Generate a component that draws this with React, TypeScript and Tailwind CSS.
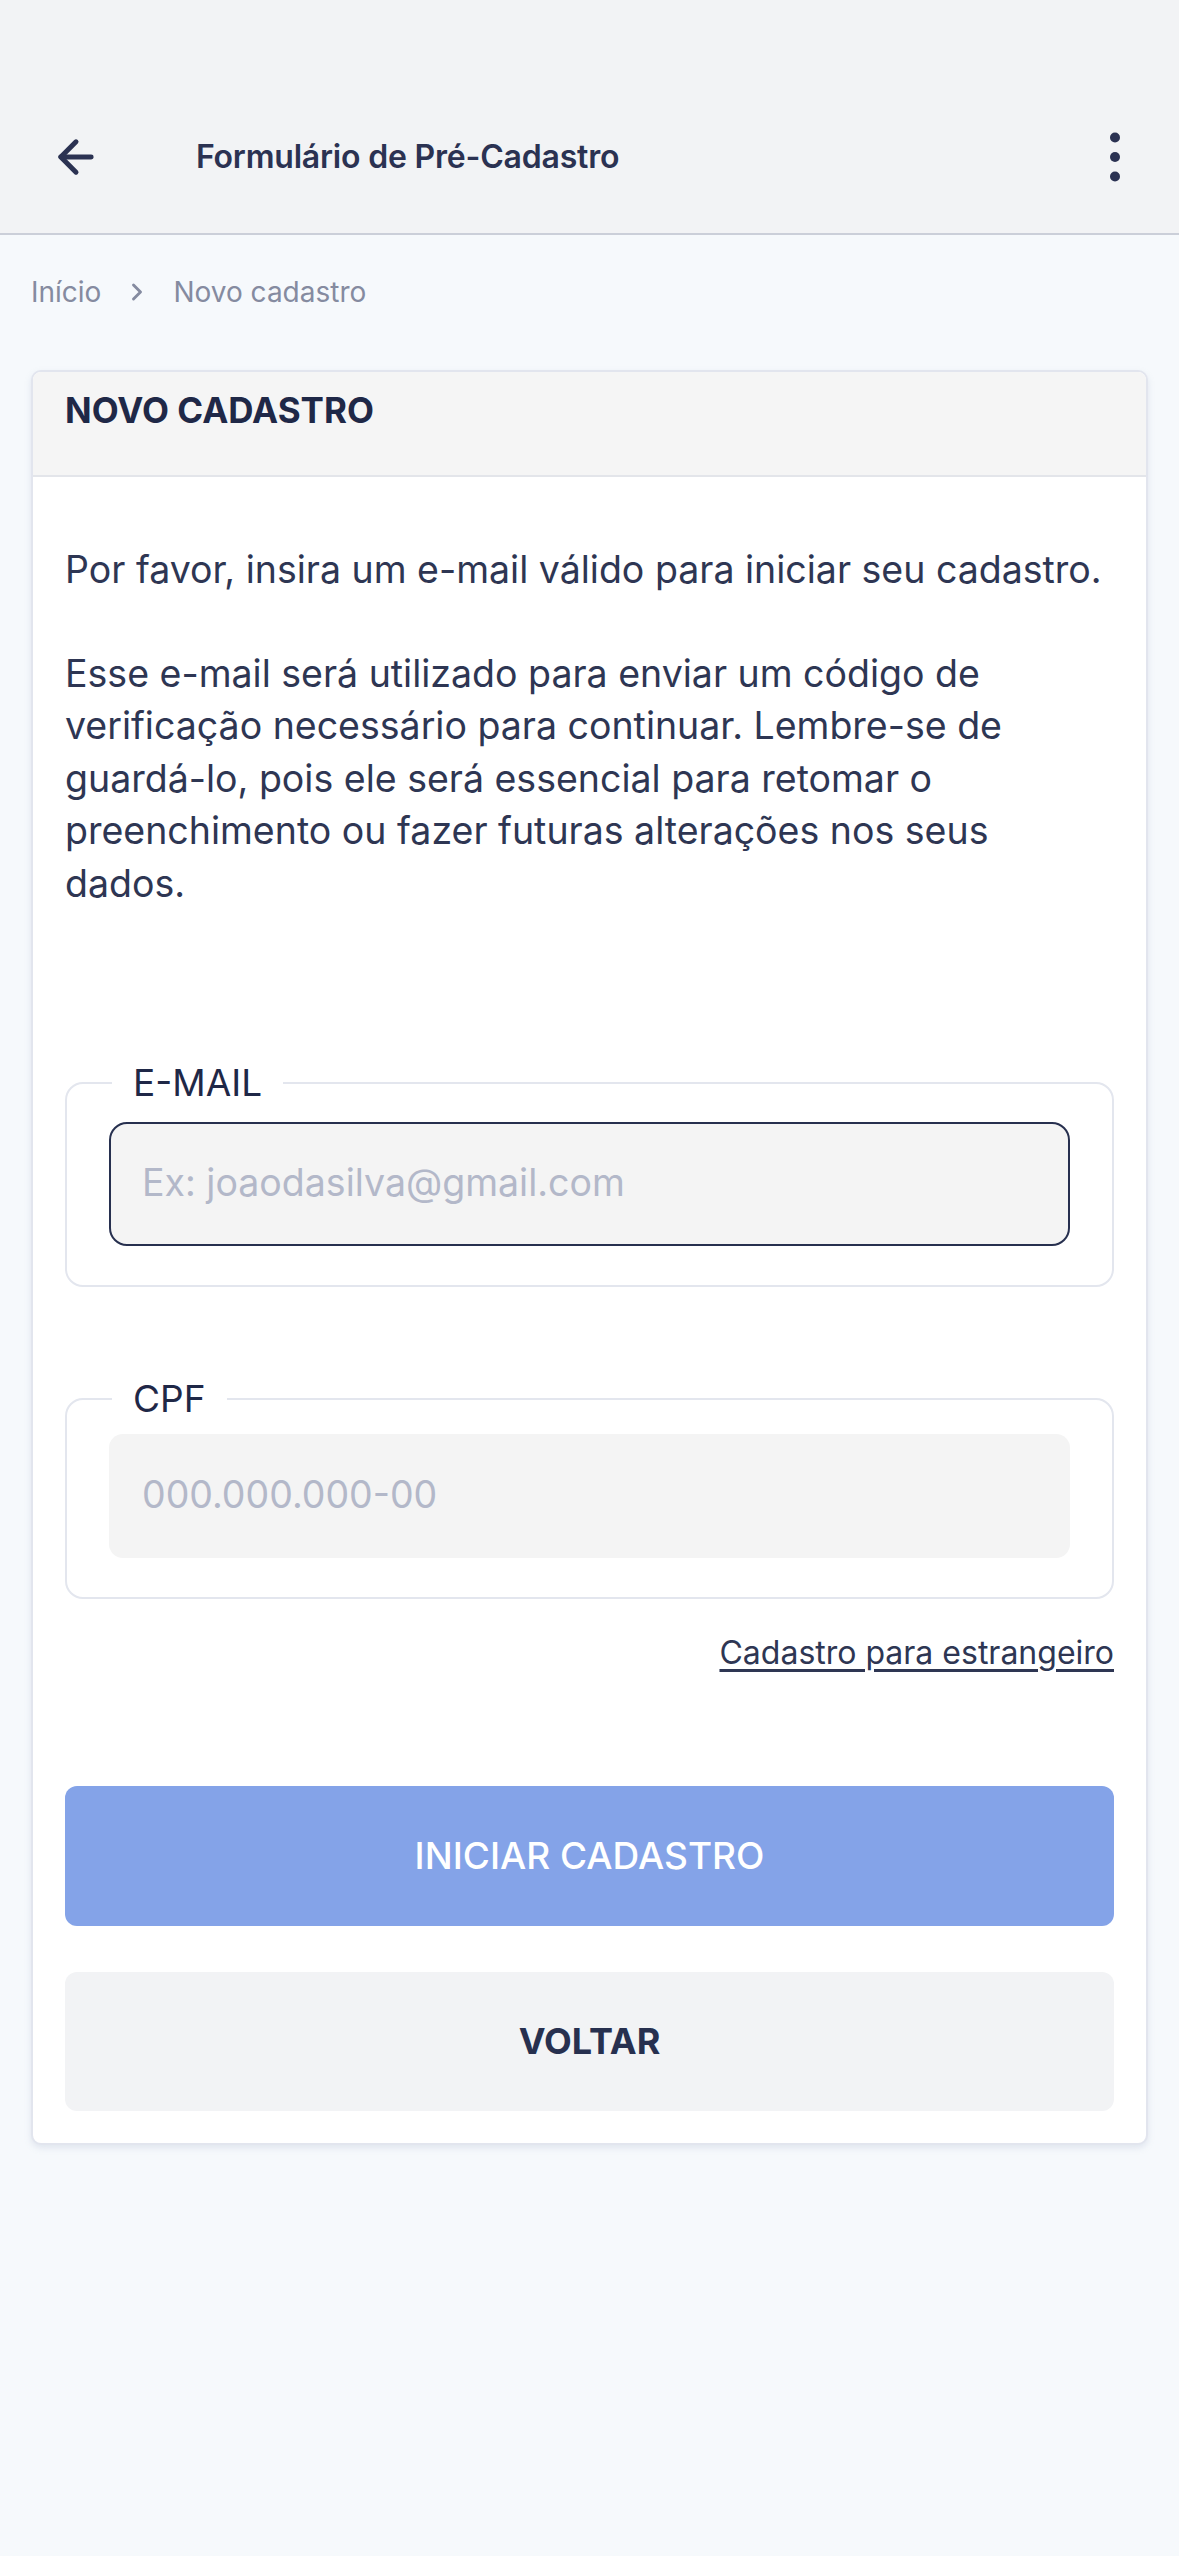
import { ArrowLeft, ChevronRight } from 'lucide-react'

function Field({
  label,
  placeholder,
  active,
  top,
}: {
  label: string
  placeholder: string
  active?: boolean
  top: string
}) {
  return (
    <fieldset className={`border-2 border-[#e3e6ee] rounded-[18px] px-[42px] pb-[39px] ${top}`}>
      <legend className="ml-[3px] px-[21px] text-[37px] leading-[40px] text-[#1f2847]">{label}</legend>
      <div
        className={
          active
            ? 'h-[124px] rounded-[18px] border-2 border-[#27304f] bg-[#f4f4f4] flex items-center px-[31px]'
            : 'h-[124px] rounded-[14px] bg-[#f4f4f4] flex items-center px-[33px]'
        }
      >
        <span className="text-[37.5px] text-[#b3b8c9]">{placeholder}</span>
      </div>
    </fieldset>
  )
}

export default function App() {
  return (
    <div className="min-h-[2556px] bg-[#f6f9fc] font-['Inter',sans-serif]">
      <header className="h-[235px] bg-[#f2f3f5] border-b-2 border-[#cbcfd9] pt-[80px]">
        <div className="h-[153px] flex items-center pl-[50px] pr-[58px]">
          <ArrowLeft size={52} strokeWidth={2.3} className="text-[#2b3252]" />
          <h1 className="ml-[94px] text-[32px] font-semibold text-[#2b3252] tracking-[-0.2px]">
            Formulário de Pré-Cadastro
          </h1>
          <svg className="ml-auto" width="12" height="52" viewBox="0 0 12 52" fill="#2b3252">
            <circle cx="6" cy="6.5" r="5" />
            <circle cx="6" cy="26" r="5" />
            <circle cx="6" cy="45.5" r="5" />
          </svg>
        </div>
      </header>

      <nav className="flex items-center gap-[22px] px-[31px] pt-[36px] text-[28px] text-[#858ba0]">
        <span>Início</span>
        <ChevronRight size={28} strokeWidth={2.5} className="text-[#858ba0]" />
        <span>Novo cadastro</span>
      </nav>

      <main className="mx-[31px] mt-[57px] bg-white border-2 border-[#e2e5ee] rounded-[10px] shadow-[0_3px_6px_rgba(160,170,200,0.25)] overflow-hidden">
        <div className="h-[105px] bg-[#f5f5f5] border-b-2 border-[#e3e5ea] px-[32px] pt-[18px]">
          <h2 className="text-[35px] font-bold text-[#1f2847] leading-[40px]">NOVO CADASTRO</h2>
        </div>

        <div className="px-[32px] pt-[67px] pb-[32px]">
          <p className="text-[37.5px] leading-[52.6px] text-[#2e3653]">
            Por favor, insira um e-mail válido para iniciar seu cadastro.
          </p>
          <p className="mt-[51px] text-[37.5px] leading-[52.6px] text-[#2e3653]">
            Esse e-mail será utilizado para enviar um código de verificação necessário para continuar. Lembre-se de
            guardá-lo, pois ele será essencial para retomar o preenchimento ou fazer futuras alterações nos seus dados.
          </p>

          <div className="mt-[152px]">
            <Field label="E-MAIL" placeholder="Ex: joaodasilva@gmail.com" active top="pt-[19px]" />
          </div>
          <div className="mt-[92px]">
            <Field label="CPF" placeholder="000.000.000-00" top="pt-[15px]" />
          </div>

          <div className="flex justify-end mt-[34px]">
            <a className="text-[32px] leading-[40px] text-[#2e3653] underline underline-offset-[5px]">
              Cadastro para estrangeiro
            </a>
          </div>

          <button className="mt-[113px] w-full h-[140px] rounded-[12px] bg-[#84a3e8] text-white text-[37px] font-medium">
            INICIAR CADASTRO
          </button>
          <button className="mt-[46px] w-full h-[139px] rounded-[12px] bg-[#f2f3f5] text-[#27304f] text-[36px] font-bold">
            VOLTAR
          </button>
        </div>
      </main>
    </div>
  )
}
